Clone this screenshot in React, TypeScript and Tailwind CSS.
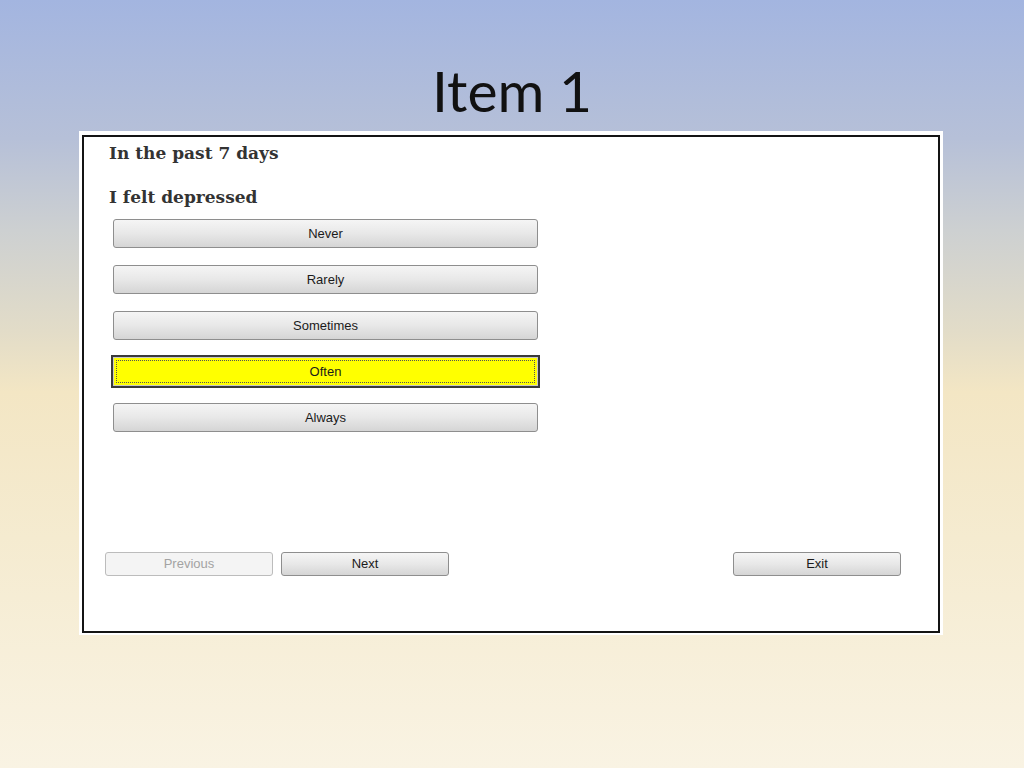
import React from 'react';

const OPTIONS = ['Never', 'Rarely', 'Sometimes', 'Often', 'Always'];
const SELECTED = 'Often';

const winBtn =
  'rounded-[3px] border border-[#8e8e8e] bg-gradient-to-b from-[#f5f5f5] via-[#e8e8e8] to-[#d5d5d5] text-[13px] text-[#1b1b1b]';

export default function App() {
  return (
    <div
      className="w-full h-[768px] overflow-hidden bg-[linear-gradient(180deg,#a3b5e0_0%,#b6c0d8_18%,#cdd0d1_30%,#e2dcc8_43%,#f3e6c4_51%,#f5ebd0_70%,#f9f3e3_100%)]"
      style={{ fontFamily: '"Liberation Sans", Arial, sans-serif' }}
    >
      <h1 className="pt-[62px] h-[131px] text-center text-[57px] leading-[56px] text-[#111] font-['Lato',sans-serif]">
        Item 1
      </h1>

      <div className="ml-[79px] w-[864px] bg-white pt-[4px] px-[3px] pb-[2px]">
        <div className="h-[498px] border-2 border-[#141414] bg-white">
          <div className="pl-[25px] pt-[5px] text-[17px] leading-[22px] font-bold text-[#333] font-['DejaVu_Serif',serif]">
            <p>In the past 7 days</p>
            <p className="mt-[22px]">I felt depressed</p>
          </div>

          <div className="mt-[11px] ml-[29px] w-[425px] flex flex-col gap-[17px]">
            {OPTIONS.map((opt) =>
              opt === SELECTED ? (
                <button
                  key={opt}
                  className="relative h-[29px] w-full bg-[#ffff00] border border-[#c8c8c8] outline-2 outline-[#3a3a3a] text-[13px] text-[#1b1b1b]"
                >
                  <span className="absolute inset-[2px] border border-dotted border-[#555]" />
                  {opt}
                </button>
              ) : (
                <button key={opt} className={`h-[29px] w-full ${winBtn}`}>
                  {opt}
                </button>
              )
            )}
          </div>

          <div className="mt-[120px] pl-[21px] pr-[37px] flex justify-between">
            <div className="flex gap-[8px]">
              <button className="h-[24px] w-[168px] rounded-[3px] border border-[#bcbcbc] bg-[#f4f4f4] text-[13px] text-[#a3a3a3]">
                Previous
              </button>
              <button className={`h-[24px] w-[168px] ${winBtn}`}>Next</button>
            </div>
            <button className={`h-[24px] w-[168px] ${winBtn}`}>Exit</button>
          </div>
        </div>
      </div>
    </div>
  );
}
